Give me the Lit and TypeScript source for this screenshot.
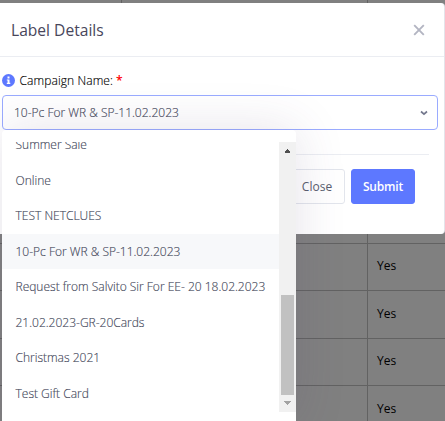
import { LitElement, html, css } from "lit";
import { customElement, state } from "lit/decorators.js";
import { classMap } from "lit/directives/class-map.js";

@customElement("app-root")
export class AppRoot extends LitElement {
  static styles = css`
    :host {
      display: block;
      position: relative;
      width: 445px;
      height: 421px;
      overflow: hidden;
      background: #808080;
      font-family: "Open Sans", "Noto Sans", sans-serif;
      font-size: 12px;
      color: #595d6e;
    }
    * { box-sizing: border-box; }
    .backdrop {
      position: absolute;
      inset: 0;
      display: grid;
      grid-template-columns: 122px 246px 1fr;
      grid-template-rows: 244px 47px 48px 47px 48px;
      color: #000;
    }
    .cell {
      border-right: 1px solid #626262;
      border-bottom: 1px solid #626262;
      padding: 0 0 3px 9px;
      display: flex;
      align-items: center;
    }
    .last { border-right: 0; }
    .modal {
      position: relative;
      margin-top: 3px;
      width: 444px;
      height: 231px;
      background: #fff;
      border-radius: 0 4px 4px 0;
      box-shadow: 1px 0 0 #e4e4ea;
    }
    .header {
      height: 54px;
      padding: 0 19px 0 11px;
      display: flex;
      align-items: center;
      justify-content: space-between;
      border-bottom: 1px solid #ebedf2;
    }
    .title { font-size: 15.6px; color: #48465b; }
    .x { width: 12px; height: 12px; display: block; }
    .body { padding: 14px 6px 0 2px; }
    .label {
      height: 18px;
      display: flex;
      align-items: center;
      color: #000;
    }
    .name { font-weight: 300; letter-spacing: 0.1px; -webkit-text-stroke: 0.15px currentColor; }
    .info { width: 13px; height: 13px; margin-right: 4.5px; }
    .star { color: #f00; margin-left: 3px; font-weight: 600; }
    .select {
      margin-top: 6px;
      height: 35px;
      border: 1px solid #9aabff;
      border-radius: 4px;
      padding: 0 9px 0 11px;
      display: flex;
      align-items: center;
      justify-content: space-between;
    }
    .opt, .item { font-weight: 300; color: #464a5c; -webkit-text-stroke: 0.15px currentColor; }
    .chev { width: 8px; height: 6px; display: block; }
    .rule { height: 1px; background: #ebedf2; margin: 24px 9px 0 9px; }
    .footer {
      display: flex;
      justify-content: flex-end;
      gap: 6px;
      margin-top: 14px;
      padding-right: 23px;
    }
    .btn {
      height: 35px;
      border: 1px solid #e2e5ec;
      border-radius: 3px;
      background: none;
      color: #595d6e;
      font: inherit;
      padding: 0;
      width: 56px;
    }
    .primary { width: 64px; background: #5d78ff; border-color: #5d78ff; color: #fff; font-weight: 600; letter-spacing: -0.2px; }
    .menu {
      position: absolute;
      left: 2px;
      top: 130px;
      width: 294px;
      height: 291px;
      padding: 12px 0 9px;
      background: #fff;
      border-radius: 4px 4px 0 0;
      box-shadow: 0 0 50px rgba(82, 63, 105, 0.15);
    }
    .view { display: flex; height: 270px; overflow: hidden; }
    .list { flex: 1; margin-top: -15px; min-width: 0; }
    .item {
      height: 35.5px;
      padding-left: 13.5px;
      display: flex;
      align-items: center;
      white-space: nowrap;
    }
    .active { background: #f7f8fa; }
    .bar {
      width: 17px;
      background: #f1f1f1;
      display: flex;
      flex-direction: column;
      align-items: center;
    }
    .arrow { width: 17px; height: 17px; display: block; }
    .track { height: 136px; }
    .thumb { width: 13px; height: 100px; background: #c1c1c1; }
  `;

  @state() private selected = "10-Pc For WR & SP-11.02.2023";

  private options = [
    "Summer Sale",
    "Online",
    "TEST NETCLUES",
    "10-Pc For WR & SP-11.02.2023",
    "Request from Salvito Sir For EE- 20 18.02.2023",
    "21.02.2023-GR-20Cards",
    "Christmas 2021",
    "Test Gift Card",
  ];

  private rows = ["", "Yes", "Yes", "Yes", "Yes"];

  render() {
    return html`
      <div class="backdrop">
        ${this.rows.map((v) => html`<div class="cell"></div><div class="cell"></div><div class="cell last">${v}</div>`)}
      </div>
      <div class="modal">
        <div class="header">
          <span class="title">Label Details</span>
          <svg class="x" viewBox="0 0 12 12"><path d="M1.2 1.2 L10.8 10.8 M10.8 1.2 L1.2 10.8" stroke="#b3b5c2" stroke-width="1.9" fill="none"/></svg>
        </div>
        <div class="body">
          <div class="label">
            <svg class="info" viewBox="0 0 13 13">
              <circle cx="6.5" cy="6.5" r="6.5" fill="#5d78ff"/>
              <path d="M5.5 2.6h2v2h-2z M4.8 5.4h2.7v3.4h.8v1.2H4.8V8.8h.8V6.6h-.8z" fill="#fff"/>
            </svg>
            <span class="name">Campaign Name:</span><span class="star">*</span>
          </div>
          <div class="select">
            <span class="opt">${this.selected}</span>
            <svg class="chev" viewBox="0 0 8 6"><path d="M1 1.5 L4 4.2 L7 1.5" stroke="#74788d" stroke-width="1.7" fill="none"/></svg>
          </div>
          <div class="rule"></div>
          <div class="footer">
            <button class="btn">Close</button>
            <button class="btn primary">Submit</button>
          </div>
        </div>
      </div>
      <div class="menu">
        <div class="view">
          <div class="list">
            ${this.options.map(
              (o) => html`<div class=${classMap({ item: true, active: o === this.selected })} @click=${() => (this.selected = o)}>${o}</div>`
            )}
          </div>
          <div class="bar">
            <svg class="arrow" viewBox="0 0 17 17"><path d="M6 11h5v-2h-1v-1h-1v-1h-1v1h-1v1h-1z" fill="#505050"/></svg>
            <div class="track"></div>
            <div class="thumb"></div>
            <svg class="arrow" viewBox="0 0 17 17"><path d="M5 6h7v1h-1v1h-1v1h-1v1h-1v-1h-1v-1h-1v-1h-1z" fill="#a3a3a3"/></svg>
          </div>
        </div>
      </div>
    `;
  }
}
